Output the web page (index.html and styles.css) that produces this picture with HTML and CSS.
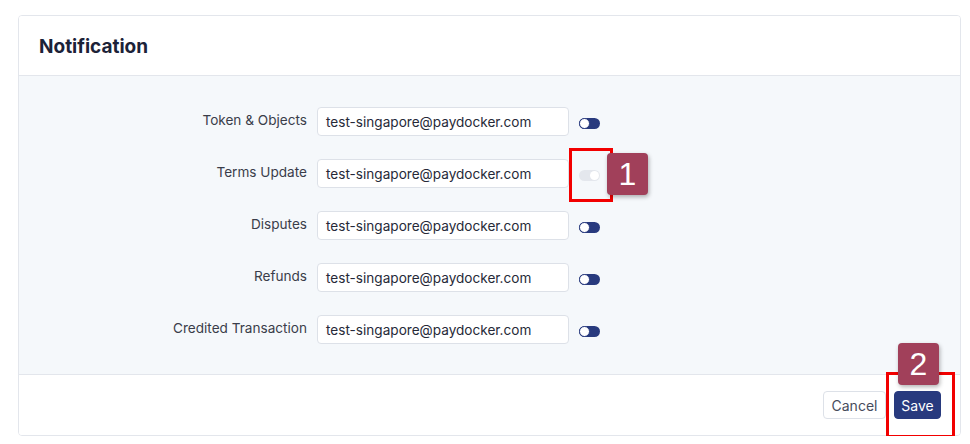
FILE: index.html
```html
<!DOCTYPE html>
<html>
<head>
<meta charset="utf-8">
<link rel="stylesheet" href="styles.css">
</head>
<body>
<div class="card">
  <div class="card-header"><h2 class="title">Notification</h2></div>
  <div class="card-body">
    <div class="row">
      <label class="label">Token &amp; Objects</label>
      <div class="input">test-singapore@paydocker.com</div>
      <span class="toggle"><span class="knob"></span></span>
    </div>
    <div class="row">
      <label class="label">Terms Update</label>
      <div class="input">test-singapore@paydocker.com</div>
      <span class="toggle toggle-off"><span class="knob"></span></span>
    </div>
    <div class="row">
      <label class="label">Disputes</label>
      <div class="input">test-singapore@paydocker.com</div>
      <span class="toggle"><span class="knob"></span></span>
    </div>
    <div class="row">
      <label class="label">Refunds</label>
      <div class="input">test-singapore@paydocker.com</div>
      <span class="toggle"><span class="knob"></span></span>
    </div>
    <div class="row">
      <label class="label">Credited Transaction</label>
      <div class="input">test-singapore@paydocker.com</div>
      <span class="toggle"><span class="knob"></span></span>
    </div>
  </div>
  <div class="card-footer">
    <button class="btn btn-light">Cancel</button>
    <button class="btn btn-primary">Save</button>
  </div>
</div>
<div class="mark mark-box box1"></div>
<div class="mark badge badge1">1</div>
<div class="mark mark-box box2"></div>
<div class="mark badge badge2">2</div>
</body>
</html>
```
FILE: styles.css
```css
html, body { margin: 0; padding: 0; background: #ffffff; }
body {
  font-family: Inter, "Noto Sans", "Liberation Sans", sans-serif;
  padding: 15px 9px 0 18px;
  position: relative;
  width: 943px;
}
.card {
  width: 941px;
  height: 419px;
  border: 1px solid #e3e6ec;
  border-radius: 4px;
  display: flex;
  flex-direction: column;
  overflow: hidden;
}
.card-header {
  height: 59px;
  border-bottom: 1px solid #e3e6ec;
  display: flex;
  align-items: center;
  padding-left: 20px;
  background: #fff;
}
.title {
  margin: 0;
  font-size: 19px;
  font-weight: 700;
  color: #1c2238;
  padding-top: 2px;
}
.card-body {
  background: #f5f8fb;
  height: 299px;
  box-sizing: border-box;
  padding-top: 31px;
  display: flex;
  flex-direction: column;
  gap: 23px;
  border-bottom: 1px solid #e3e6ec;
}
.row {
  display: grid;
  grid-template-columns: 288px 252px 21px;
  column-gap: 10px;
  align-items: center;
  height: 29px;
}
.label {
  text-align: right;
  font-size: 13.6px;
  color: #3a3d4a;
  margin-top: -4px;
}
.input {
  box-sizing: border-box;
  height: 29px;
  border: 1px solid #dde1e8;
  border-radius: 4px;
  background: #fff;
  font-size: 13.6px;
  color: #262938;
  padding-left: 8px;
  display: flex;
  align-items: center;
}
.toggle {
  position: relative;
  width: 21px;
  height: 11px;
  border-radius: 6px;
  background: #283a7e;
  margin-top: 3px;
}
.toggle .knob {
  position: absolute;
  left: 0;
  top: 0;
  box-sizing: border-box;
  width: 11px;
  height: 11px;
  border-radius: 50%;
  background: #fff;
  border: 1.5px solid #283a7e;
}
.toggle-off { background: #e4e7ed; }
.toggle-off .knob { left: auto; right: 1px; top: 1px; width: 9px; height: 9px; border: none; }
.card-footer {
  flex: 1;
  display: flex;
  justify-content: flex-end;
  align-items: flex-start;
  gap: 8px;
  padding: 16px 19px 0 0;
  background: #fff;
}
.btn {
  height: 28px;
  font-family: Inter, "Noto Sans", "Liberation Sans", sans-serif;
  font-size: 14px;
  border-radius: 4px;
  padding: 0;
  cursor: pointer;
}
.btn-light {
  width: 63px;
  background: #fff;
  border: 1px solid #dde1e8;
  color: #474c5c;
}
.btn-primary {
  width: 47px;
  background: #283a7e;
  border: 1px solid #283a7e;
  color: #fff;
  font-weight: 400;
}
.mark { position: absolute; }
.mark-box {
  box-sizing: border-box;
  border: 3px solid #f20000;
}
.box1 { left: 569px; top: 148px; width: 44px; height: 54px; }
.box2 { left: 886px; top: 372px; width: 69px; height: 66px; }
.badge {
  width: 41px;
  height: 42px;
  border-radius: 4px;
  background: #a1405a;
  color: #fff;
  font-family: "Liberation Sans", Arial, sans-serif;
  font-size: 32px;
  display: flex;
  align-items: center;
  justify-content: center;
  box-shadow: 1px 2px 4px rgba(0,0,0,0.3);
}
.badge1 { left: 607px; top: 153px; }
.badge2 { left: 898px; top: 343px; }
```
